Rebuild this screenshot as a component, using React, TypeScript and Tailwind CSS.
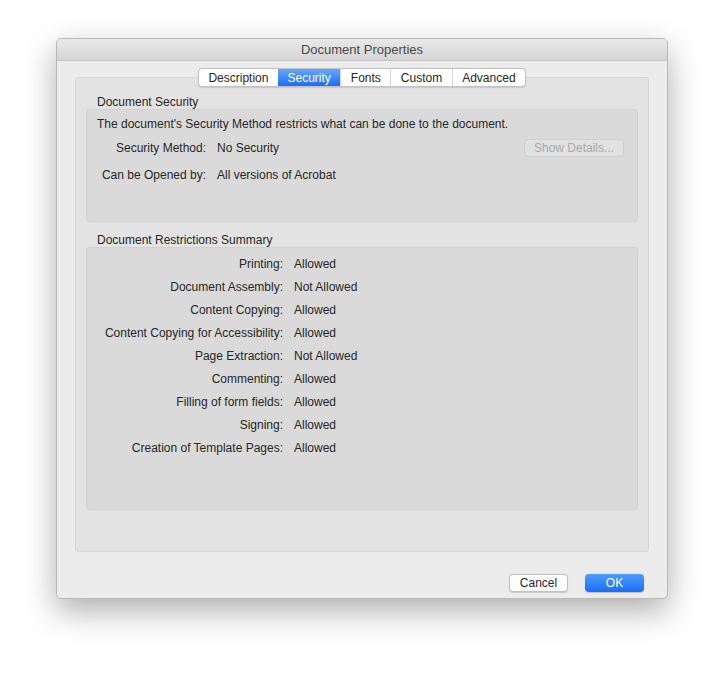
const tabs = ['Description', 'Security', 'Fonts', 'Custom', 'Advanced'];

const restrictions = [
  { label: 'Printing:', value: 'Allowed' },
  { label: 'Document Assembly:', value: 'Not Allowed' },
  { label: 'Content Copying:', value: 'Allowed' },
  { label: 'Content Copying for Accessibility:', value: 'Allowed' },
  { label: 'Page Extraction:', value: 'Not Allowed' },
  { label: 'Commenting:', value: 'Allowed' },
  { label: 'Filling of form fields:', value: 'Allowed' },
  { label: 'Signing:', value: 'Allowed' },
  { label: 'Creation of Template Pages:', value: 'Allowed' },
];

export default function App() {
  return (
    <div
      className="min-h-screen bg-white pt-[38px] pl-[56px] text-[12px] text-[#262626]"
      style={{ fontFamily: '"Liberation Sans", Arial, sans-serif' }}
    >
      <div className="w-[612px] h-[561px] rounded-[5px] bg-[#ececec] flex flex-col overflow-hidden border border-[#b9b9b9] shadow-[0_12px_32px_rgba(0,0,0,0.32)]">
        {/* Title bar */}
        <div className="h-[22px] shrink-0 flex items-center justify-center bg-gradient-to-b from-[#e9e9e9] to-[#d4d4d4] border-b border-[#c4c4c4] text-[13px] text-[#4a4a4a]">
          Document Properties
        </div>

        <div className="flex-1 flex flex-col px-[18px] pt-[7px]">
          {/* Tabs */}
          <div className="relative z-10 flex justify-center">
            <div className="flex h-[19px] rounded-[4px] border border-[#c2c2c2] bg-white overflow-hidden shadow-[0_0.5px_1px_rgba(0,0,0,0.12)]">
              {tabs.map((t, i) => (
                <div
                  key={t}
                  className={`flex items-center justify-center px-[9.5px] leading-none ${
                    i > 0 ? 'border-l border-[#d3d3d3]' : ''
                  } ${
                    t === 'Security'
                      ? 'bg-gradient-to-b from-[#66a5fc] to-[#1a6cf7] text-white border-l-0'
                      : 'text-[#262626]'
                  }`}
                >
                  {t}
                </div>
              ))}
            </div>
          </div>

          {/* Tab box */}
          <div className="-mt-[10px] h-[475px] rounded-[3px] bg-[#e3e3e3] border border-[#d8d8d8] px-[10px] pt-[17px]">
            <div className="h-[14px] leading-[14px] pl-[11px]">Document Security</div>
            <div className="h-[113px] rounded-[3px] bg-[#dadada] border border-[#d1d1d1] pt-[6px]">
              <div className="pl-[10px] h-[16px] leading-[16px]">
                The document's Security Method restricts what can be done to the document.
              </div>
              <div className="flex items-center mt-[7px] h-[18px] pr-[13px]">
                <div className="w-[119px] text-right">Security Method:</div>
                <div className="pl-[11px] flex-1">No Security</div>
                <div className="w-[100px] h-[18px] rounded-[4px] border border-[#cdcdcd] bg-[#e1e1e1] text-[#a9a9a9] flex items-center justify-center">
                  Show Details...
                </div>
              </div>
              <div className="flex items-center mt-[9px] h-[18px]">
                <div className="w-[119px] text-right">Can be Opened by:</div>
                <div className="pl-[11px]">All versions of Acrobat</div>
              </div>
            </div>

            <div className="mt-[11px] h-[14px] leading-[14px] pl-[11px]">Document Restrictions Summary</div>
            <div className="h-[263px] rounded-[3px] bg-[#dadada] border border-[#d1d1d1] pt-[7px] flex flex-col gap-[5px]">
              {restrictions.map((r) => (
                <div key={r.label} className="flex items-center h-[18px]">
                  <div className="w-[196px] text-right">{r.label}</div>
                  <div className="pl-[11px]">{r.value}</div>
                </div>
              ))}
            </div>
          </div>

          {/* Buttons */}
          <div className="flex justify-end gap-[17px] mt-[22px] pr-[5px]">
            <div className="w-[59px] h-[18px] rounded-[4px] border border-[#c0c0c0] bg-white flex items-center justify-center shadow-[0_0.5px_1px_rgba(0,0,0,0.15)]">
              Cancel
            </div>
            <div className="w-[59px] h-[18px] rounded-[4px] bg-gradient-to-b from-[#4f9cfd] to-[#1a6bf8] text-white flex items-center justify-center shadow-[0_0.5px_1px_rgba(0,0,0,0.2)]">
              OK
            </div>
          </div>
        </div>
      </div>
    </div>
  );
}
